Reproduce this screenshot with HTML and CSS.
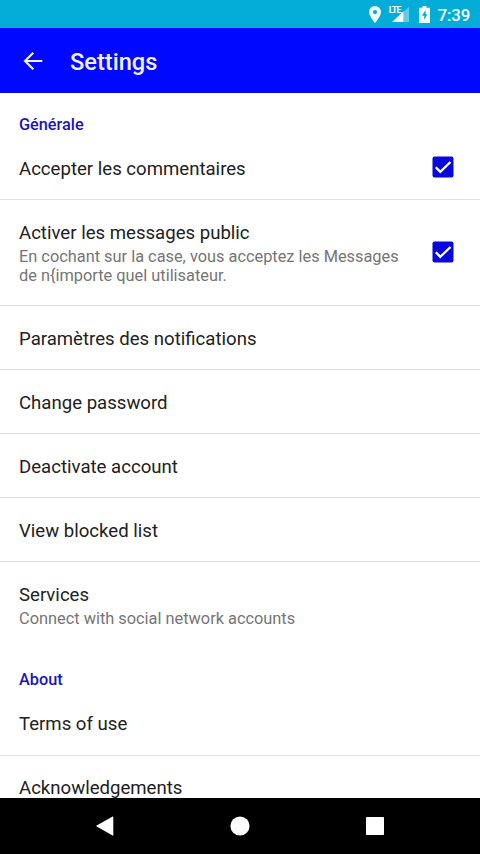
FILE: index.html
```html
<!DOCTYPE html>
<html lang="fr">
<head>
<meta charset="utf-8">
<title>Settings</title>
<link rel="stylesheet" href="styles.css">
</head>
<body>
<div class="screen">
  <div class="status">
    <svg class="pin" width="12" height="17" viewBox="0 0 12 17"><path fill="#f2fbfd" fill-rule="evenodd" d="M6 0a6 6 0 0 0-6 6c0 4.300 6 11 6 11s6-6.700 6-11a6 6 0 0 0-6-6zm0 4a2.100 2.100 0 1 1 0 4.200A2.100 2.100 0 0 1 6 4z"/></svg>
    <span class="lte">LTE</span>
    <svg class="signal" width="17" height="16" viewBox="0 0 17 16"><path fill="#fff" fill-opacity=".38" d="M17 1v15H11.500V6z"/><path fill="#f2fbfd" d="M11.500 5.200V16H0z"/></svg>
    <svg class="battery" width="11" height="17" viewBox="0 0 11 17"><path fill="#f2fbfd" fill-rule="evenodd" d="M3.500 0h4v1.700H11V17H0V1.700h3.500zM6.600 4L3 9.700h2.200v4.300L8.300 8.300H6.600z"/></svg>
    <span class="clock">7:39</span>
  </div>
  <header class="bar">
    <svg width="20" height="20" viewBox="0 0 20 20" fill="none" stroke="#f0f0ff" stroke-width="2.200"><path d="M19.300 10H2M10.300 1.700L2 10l8.300 8.300"/></svg>
    <h1>Settings</h1>
  </header>
  <main class="list">
    <h2>Générale</h2>
    <div class="row first"><div class="text"><p class="title">Accepter les commentaires</p></div><svg class="check raised" width="22" height="22" viewBox="0 0 22 22"><rect x=".5" y=".5" width="21" height="21" rx="2" fill="#0808dc"/><path d="M3.800 11.300l4.500 4.500L18.500 6" fill="none" stroke="#fff" stroke-width="2.300"/></svg></div>
    <div class="row tall"><div class="text"><p class="title">Activer les messages public</p><p class="sub">En cochant sur la case, vous acceptez les Messages<br>de n{importe quel utilisateur.</p></div><svg class="check" width="22" height="22" viewBox="0 0 22 22"><rect x=".5" y=".5" width="21" height="21" rx="2" fill="#0808dc"/><path d="M3.800 11.300l4.500 4.500L18.500 6" fill="none" stroke="#fff" stroke-width="2.300"/></svg></div>
    <div class="row single"><p class="title">Paramètres des notifications</p></div>
    <div class="row single"><p class="title">Change password</p></div>
    <div class="row single"><p class="title">Deactivate account</p></div>
    <div class="row single"><p class="title">View blocked list</p></div>
    <div class="row services"><div class="text"><p class="title">Services</p><p class="sub">Connect with social network accounts</p></div></div>
    <h2 class="about">About</h2>
    <div class="row last"><p class="title">Terms of use</p></div>
    <div class="row"><p class="title">Acknowledgements</p></div>
  </main>
  <nav class="nav">
    <svg width="18" height="20" viewBox="0 0 18 20"><path fill="#fff" d="M17.300 1v18.300q0 .7-.7.300L.7 10.600q-.7-.5 0-1L16.600.5q.7-.3.700.5z"/></svg>
    <svg width="20" height="20" viewBox="0 0 20 20"><circle cx="10" cy="10" r="9.600" fill="#fff"/></svg>
    <svg width="18" height="18" viewBox="0 0 18 18"><rect width="18" height="18" rx=".7" fill="#fff"/></svg>
  </nav>
</div>
</body>
</html>
```
FILE: styles.css
```css
* { box-sizing: border-box; margin: 0; padding: 0; }
body { font-family: Roboto, sans-serif; background: #fff; }
svg { display: block; flex: none; }
.screen { width: 480px; height: 854px; display: flex; flex-direction: column; overflow: hidden; }
.status { height: 28px; flex: none; background: #03add8; display: flex; align-items: center; justify-content: flex-end; padding-right: 10px; color: #f2fbfd; }
.lte { font-size: 9px; font-weight: 700; line-height: 10px; align-self: flex-start; margin: 5px 0 0 8px; width: 13px; letter-spacing: -.8px; }
.signal { margin-left: -10px; }
.battery { margin-left: 10px; }
.clock { font-size: 16.800px; font-weight: 500; line-height: 28px; margin: 1px 0 0 8px; letter-spacing: -.2px; }
.bar { height: 65px; flex: none; background: #0008ff; display: flex; align-items: center; padding-left: 23px; gap: 27px; color: #f0f0ff; }
.bar h1 { font-size: 23.600px; font-weight: 500; line-height: 30px; padding-top: 2px; }
.list { flex: 1; min-height: 0; overflow: hidden; }
h2 { height: 44px; padding: 21px 19px 0; font-size: 16.300px; line-height: 22px; font-weight: 500; color: #1a14c0; }
.row { height: 64px; display: flex; align-items: center; padding: 0 26px 0 19px; border-bottom: 1px solid #dfdfdf; }
.text { flex: 1; }
.title { font-size: 18.600px; line-height: 24px; color: #212121; white-space: nowrap; }
.single { padding-top: 2px; }
.sub { font-size: 16.350px; line-height: 19px; color: #757575; white-space: nowrap; margin-top: 2px; }
.first { height: 63px; padding-top: 1px; }
.last { height: 63px; padding-bottom: 1px; }
.check { margin-top: -2px; }
.raised { margin-top: -3px; }
.tall { height: 106px; }
.services { height: 87px; border: 0; }
.about { padding-top: 20px; }
.nav { height: 56px; flex: none; background: #000; display: flex; align-items: center; justify-content: space-between; padding: 0 96px; }
```
